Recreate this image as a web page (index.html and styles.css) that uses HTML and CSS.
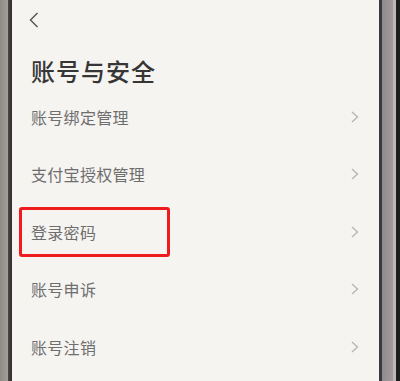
FILE: index.html
```html
<!DOCTYPE html>
<html lang="zh">
<head>
<meta charset="utf-8">
<link rel="stylesheet" href="styles.css">
</head>
<body>
<div class="frame">
  <div class="bezel-left"></div>
  <div class="edge-left"></div>
  <main class="screen">
    <div class="topbar">
      <svg class="back" width="10" height="16" viewBox="0 0 10 16"><polyline points="8.5,1 1.5,8 8.5,15" fill="none" stroke="#5a5a5a" stroke-width="1.5" stroke-linejoin="miter"/></svg>
    </div>
    <h1 class="title">账号与安全</h1>
    <ul class="list">
      <li class="row"><span class="label">账号绑定管理</span><svg class="chev" width="8" height="12" viewBox="0 0 8 12"><polyline points="1,1 6.5,6 1,11" fill="none" stroke="#b4b4b4" stroke-width="1.3"/></svg></li>
      <li class="row"><span class="label">支付宝授权管理</span><svg class="chev" width="8" height="12" viewBox="0 0 8 12"><polyline points="1,1 6.5,6 1,11" fill="none" stroke="#b4b4b4" stroke-width="1.3"/></svg></li>
      <li class="row"><span class="label">登录密码</span><svg class="chev" width="8" height="12" viewBox="0 0 8 12"><polyline points="1,1 6.5,6 1,11" fill="none" stroke="#b4b4b4" stroke-width="1.3"/></svg><span class="highlight"></span></li>
      <li class="row"><span class="label">账号申诉</span><svg class="chev" width="8" height="12" viewBox="0 0 8 12"><polyline points="1,1 6.5,6 1,11" fill="none" stroke="#b4b4b4" stroke-width="1.3"/></svg></li>
      <li class="row"><span class="label">账号注销</span><svg class="chev" width="8" height="12" viewBox="0 0 8 12"><polyline points="1,1 6.5,6 1,11" fill="none" stroke="#b4b4b4" stroke-width="1.3"/></svg></li>
    </ul>
  </main>
  <div class="edge-right"></div>
  <div class="bezel-right"></div>
  <div class="bezel-shine"></div>
  <div class="bezel-outer"></div>
</div>
</body>
</html>
```

FILE: styles.css
```css
html, body {
  margin: 0;
  padding: 0;
}
body {
  width: 400px;
  height: 381px;
  overflow: hidden;
  background: #f3f2ef;
  font-family: "Noto Sans CJK SC", "Noto Sans", sans-serif;
}
.frame {
  display: flex;
  width: 400px;
  height: 381px;
}
.bezel-left {
  width: 8px;
  background: linear-gradient(to right, #8e8a86, #a29e9a);
}
.edge-left {
  width: 4px;
  background: linear-gradient(to right, #4a4846, #2e2d2c);
}
.screen {
  flex: 1;
  background: #f5f4f1;
  padding: 0 20px 0 19px;
  box-sizing: border-box;
  min-width: 0;
}
.edge-right {
  width: 3px;
  background: #3a3a40;
}
.bezel-right {
  width: 11px;
  background: linear-gradient(to right, #8f8a8e, #a39b9c);
}
.bezel-shine {
  width: 3px;
  background: #bdb6b6;
}
.bezel-outer {
  width: 4px;
  background: #1e1d1e;
}
.topbar {
  height: 40px;
  display: flex;
  align-items: center;
}
.back {
  display: block;
  margin-left: -2px;
}
.title {
  margin: 15px 0 0 0;
  height: 33.75px;
  line-height: 32px;
  font-size: 24px;
  font-weight: 500;
  color: #363636;
  letter-spacing: 1px;
}
.list {
  list-style: none;
  margin: 0;
  padding: 0;
}
.row {
  position: relative;
  height: 57.5px;
  box-sizing: border-box;
  padding-bottom: 2px;
  display: flex;
  align-items: center;
  justify-content: space-between;
}
.label {
  font-size: 16px;
  color: #6e6e6e;
  letter-spacing: 0.3px;
}
.chev {
  display: block;
}
.highlight {
  position: absolute;
  left: -12px;
  top: 3px;
  width: 151px;
  height: 50px;
  box-sizing: border-box;
  border: 3px solid #ee1c1c;
  border-radius: 3px;
}
```
